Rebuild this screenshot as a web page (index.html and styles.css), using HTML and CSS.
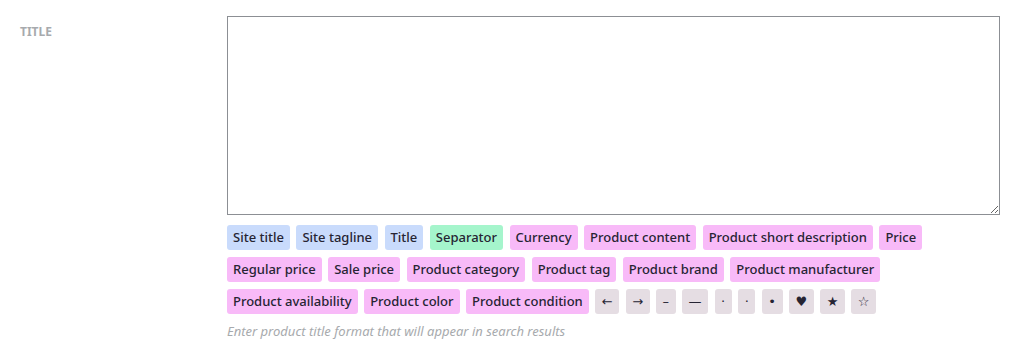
FILE: index.html
```html
<!DOCTYPE html>
<html>
<head>
<meta charset="utf-8">
<link rel="stylesheet" href="styles.css">
</head>
<body>
<div class="field">
  <label class="field-label">Title</label>
  <div class="field-body">
    <textarea class="title-input"></textarea>
    <div class="tags">
      <span class="tag tag-blue">Site title</span>
      <span class="tag tag-blue">Site tagline</span>
      <span class="tag tag-blue">Title</span>
      <span class="tag tag-green">Separator</span>
      <span class="tag tag-pink">Currency</span>
      <span class="tag tag-pink">Product content</span>
      <span class="tag tag-pink">Product short description</span>
      <span class="tag tag-pink">Price</span>
      <span class="tag tag-pink">Regular price</span>
      <span class="tag tag-pink">Sale price</span>
      <span class="tag tag-pink">Product category</span>
      <span class="tag tag-pink">Product tag</span>
      <span class="tag tag-pink">Product brand</span>
      <span class="tag tag-pink">Product manufacturer</span>
      <span class="tag tag-pink">Product availability</span>
      <span class="tag tag-pink">Product color</span>
      <span class="tag tag-pink">Product condition</span>
      <span class="tag tag-grey">←</span>
      <span class="tag tag-grey">→</span>
      <span class="tag tag-grey">–</span>
      <span class="tag tag-grey">—</span>
      <span class="tag tag-grey">·</span>
      <span class="tag tag-grey">·</span>
      <span class="tag tag-grey">•</span>
      <span class="tag tag-grey">♥</span>
      <span class="tag tag-grey">★</span>
      <span class="tag tag-grey">☆</span>
    </div>
    <p class="hint">Enter product title format that will appear in search results</p>
  </div>
</div>
</body>
</html>
```
FILE: styles.css
```css
html, body {
  margin: 0;
  padding: 0;
  background: #ffffff;
}
body {
  font-family: "Noto Sans", "Open Sans", sans-serif;
  color: #3c434a;
}
.field {
  display: grid;
  grid-template-columns: 207px 773px;
  padding: 16px 20px 0 20px;
}
.field-label {
  font-size: 12px;
  font-weight: 700;
  text-transform: uppercase;
  color: #a7aaad;
  padding-top: 7px;
}
.field-body {
  display: flex;
  flex-direction: column;
}
.title-input {
  box-sizing: border-box;
  width: 773px;
  height: 199px;
  border: 1px solid #8c8f94;
  border-radius: 0;
  margin: 0;
  padding: 4px 8px;
  resize: vertical;
  font-family: inherit;
}
.tags {
  display: flex;
  flex-wrap: wrap;
  gap: 7px 6.5px;
  margin-top: 10px;
}
.tag {
  box-sizing: border-box;
  height: 25px;
  line-height: 25px;
  padding: 0 6px;
  border-radius: 3px;
  font-size: 13px;
  font-weight: 500;
  color: #262433;
  white-space: nowrap;
}
.tag-blue { background: #c9dbfc; }
.tag-green { background: #a5f5cc; }
.tag-pink { background: #f8baf8; }
.tag-grey {
  background: #e5dde3;
  font-family: "DejaVu Sans", sans-serif;
  font-size: 13px;
  padding: 0 6.5px;
  text-align: center;
}
.hint {
  margin: 8px 0 0 0;
  font-size: 13px;
  font-style: italic;
  color: #a7aaad;
}
```
